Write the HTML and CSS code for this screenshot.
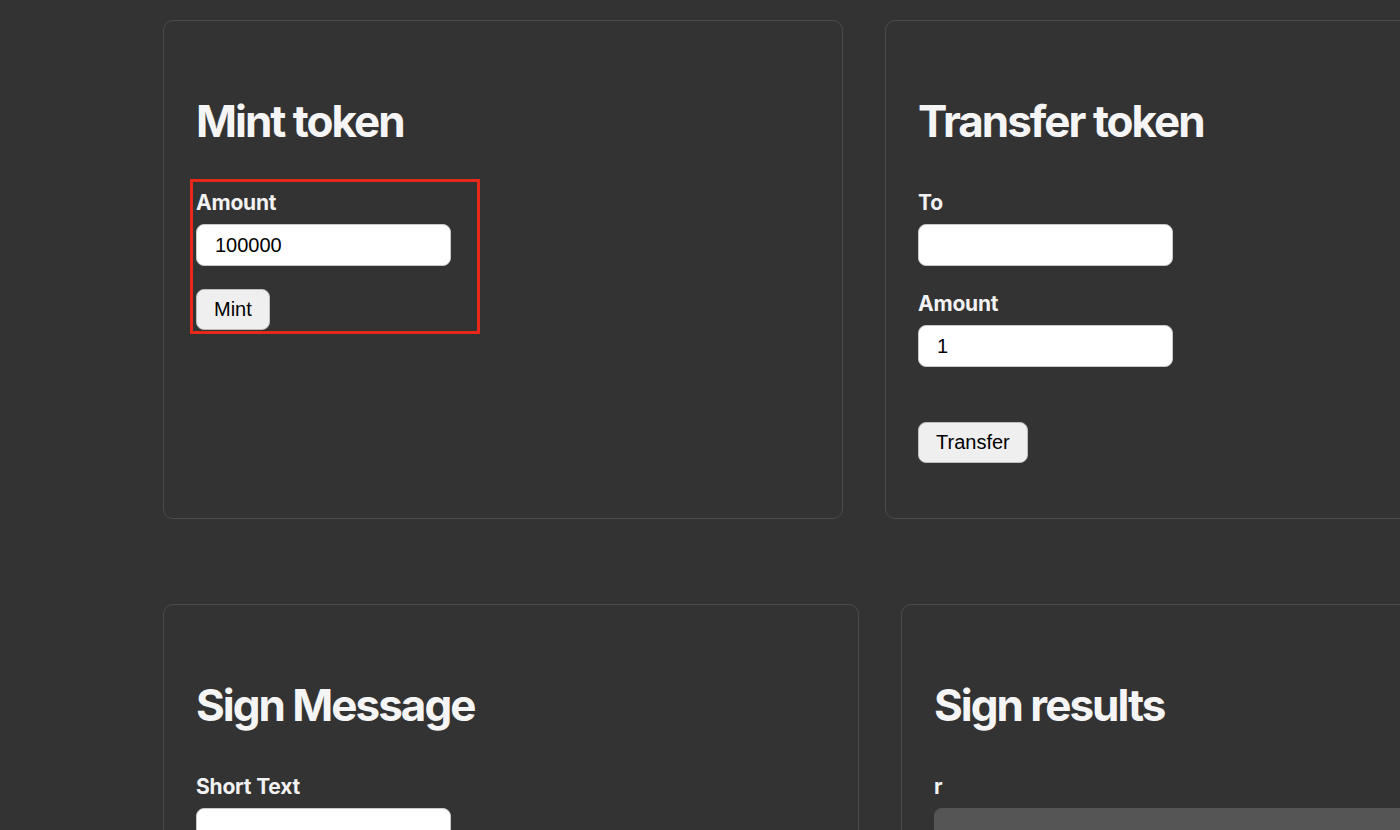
FILE: index.html
```html
<!DOCTYPE html>
<html lang="en">
  <head>
    <meta charset="UTF-8" />
    <meta name="viewport" content="width=device-width, initial-scale=1.0" />
    <title>Token Playground</title>
    <link rel="stylesheet" href="styles.css">
  </head>
  <body>
    <main class="page">
      <!-- Token actions -->
      <div class="row">
        <section class="card card-mint">
          <h2 class="card-title">Mint token</h2>
          <div class="form form-highlight">
            <div class="field">
              <label class="label" for="mint-amount">Amount</label>
              <input class="input" id="mint-amount" type="text" value="100000">
            </div>
            <button class="btn">Mint</button>
          </div>
        </section>

        <section class="card card-transfer">
          <h2 class="card-title">Transfer token</h2>
          <div class="form">
            <div class="field">
              <label class="label" for="transfer-to">To</label>
              <input class="input" id="transfer-to" type="text" value="">
            </div>
            <div class="field">
              <label class="label" for="transfer-amount">Amount</label>
              <input class="input" id="transfer-amount" type="text" value="1">
            </div>
            <div class="status"></div>
            <button class="btn">Transfer</button>
          </div>
        </section>
      </div>

      <!-- Signing -->
      <div class="row">
        <section class="card card-sign">
          <h2 class="card-title">Sign Message</h2>
          <div class="form">
            <div class="field">
              <label class="label" for="short-text">Short Text</label>
              <input class="input" id="short-text" type="text" value="">
            </div>
          </div>
        </section>

        <section class="card card-results">
          <h2 class="card-title">Sign results</h2>
          <div class="form">
            <div class="field">
              <label class="label">r</label>
              <div class="output"></div>
            </div>
          </div>
        </section>
      </div>
    </main>
  </body>
</html>
```

FILE: styles.css
```css
html,
body {
  margin: 0;
  overflow: hidden;
  background-color: #333333;
}

body {
  font-family: 'Inter', 'Noto Sans', sans-serif;
  color: #f4f4f4;
}

.page {
  padding: 20px 0 0 163px;
  display: flex;
  flex-direction: column;
  gap: 85px;
}

.row {
  display: flex;
  gap: 42px;
  align-items: stretch;
}

.card {
  flex: none;
  box-sizing: border-box;
  border: 1px solid #4b4b4b;
  border-radius: 10px;
  padding: 32px 32px 55px;
}

.card-mint {
  width: 680px;
}

.card-transfer {
  width: 700px;
}

.card-sign {
  width: 696px;
}

.card-results {
  width: 700px;
}

.card-title {
  margin: 42px 0 0;
  font-size: 44px;
  line-height: 52px;
  font-weight: 700;
  letter-spacing: -2px;
  color: #f5f5f5;
}

.form {
  margin-top: 44px;
}

/* the selected block is framed in red */
.form-highlight {
  width: 281px;
  margin: 32px 0 0 -6px;
  padding: 9px 0 1px 3px;
  border: 3px solid #e8281b;
}

.field {
  margin-bottom: 23px;
}

.field + .field {
  margin-top: 26px;
}

.label {
  display: block;
  margin-bottom: 9px;
  font-size: 21px;
  line-height: 24px;
  font-weight: 700;
  letter-spacing: -0.2px;
  color: #f2f2f2;
}

.input {
  display: block;
  box-sizing: border-box;
  width: 255px;
  height: 42px;
  margin: 0;
  padding: 0 18px;
  border: 1px solid #c9c9c9;
  border-radius: 8px;
  background: #ffffff;
  font-family: 'Liberation Sans', Arial, sans-serif;
  font-size: 20px;
  color: #000000;
}

.output {
  width: 660px;
  height: 60px;
  border-radius: 8px;
  background: #555555;
}

.status {
  height: 32px;
}

.btn {
  display: block;
  box-sizing: border-box;
  height: 41px;
  margin: 0;
  padding: 0 17px;
  border: 1px solid #bdbdbd;
  border-radius: 8px;
  background: #efefef;
  font-family: 'Liberation Sans', Arial, sans-serif;
  font-size: 20px;
  color: #000000;
}
```
